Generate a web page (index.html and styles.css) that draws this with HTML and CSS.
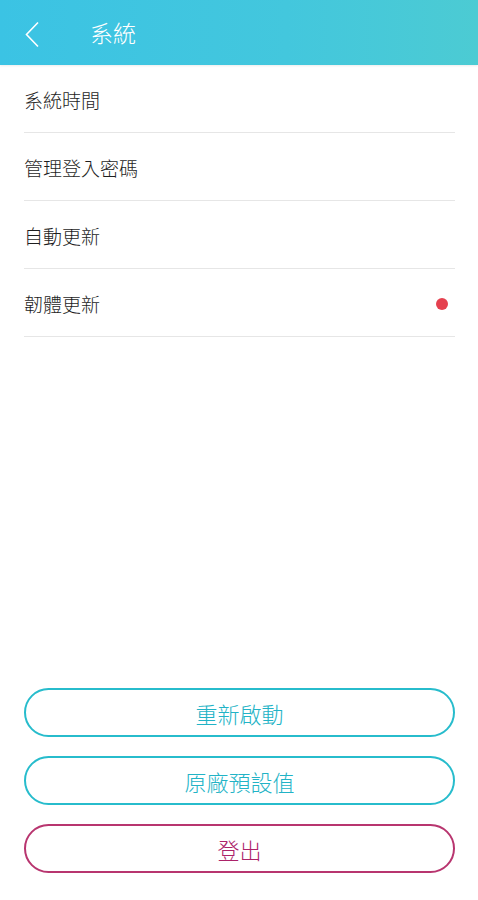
FILE: index.html
```html
<!DOCTYPE html>
<html lang="zh-Hant">
<head>
<meta charset="utf-8">
<link rel="stylesheet" href="styles.css">
</head>
<body>
<div class="page">
  <header class="topbar">
    <svg class="back" width="20" height="30" viewBox="0 0 20 30"><path d="M15 3.5 L3.5 15.5 L15 27.5" fill="none" stroke="#fff" stroke-width="1.6"/></svg>
    <h1 class="title">系統</h1>
  </header>
  <ul class="list">
    <li class="row">系統時間</li>
    <li class="row">管理登入密碼</li>
    <li class="row">自動更新</li>
    <li class="row">韌體更新<span class="dot"></span></li>
  </ul>
  <div class="spacer"></div>
  <div class="actions">
    <button class="btn teal">重新啟動</button>
    <button class="btn teal">原廠預設值</button>
    <button class="btn magenta">登出</button>
  </div>
</div>
</body>
</html>
```
FILE: styles.css
```css
html, body { margin: 0; padding: 0; background: #fff; }
body { font-family: "Noto Sans CJK TC", "Noto Sans", sans-serif; }
.page { min-height: 900px; display: flex; flex-direction: column; }
.topbar {
  height: 65px;
  display: flex;
  align-items: center;
  background: linear-gradient(90deg, #3bc3e4 0%, #43c7dd 60%, #4ccbd3 100%);
  box-shadow: 0 1px 2px rgba(0,0,0,0.08);
  box-sizing: border-box;
  padding-left: 23px;
}
.back { display: block; margin-top: 2px; }
.title {
  margin: 0 0 0 47px;
  font-size: 23px;
  font-weight: 300;
  color: #fff;
  line-height: 1;
}
.list { list-style: none; margin: 0; padding: 0 23px 0 24px; }
.row {
  border-bottom: 1.5px solid #e6e6e6;
  display: flex;
  align-items: center;
  justify-content: space-between;
  font-size: 19px;
  font-weight: 300;
  color: #1e1e1e;
  padding-top: 2px;
  box-sizing: border-box;
  height: 68px;
}
.dot {
  width: 12px; height: 12px; border-radius: 50%;
  background: #e5414f;
  margin-right: 7px;
}
.spacer { flex: 1; }
.actions {
  display: flex; flex-direction: column; gap: 19px;
  padding: 0 23px 27px 24px;
}
.btn {
  height: 49px;
  border-radius: 25px;
  background: #fff;
  font-family: "Noto Sans CJK TC", "Noto Sans", sans-serif;
  font-size: 22px;
  font-weight: 300;
  line-height: 1;
  padding: 0;
}
.teal { border: 2px solid #27bccc; color: #22b3c6; }
.magenta { border: 2px solid #b8356f; color: #ac2369; }
```
